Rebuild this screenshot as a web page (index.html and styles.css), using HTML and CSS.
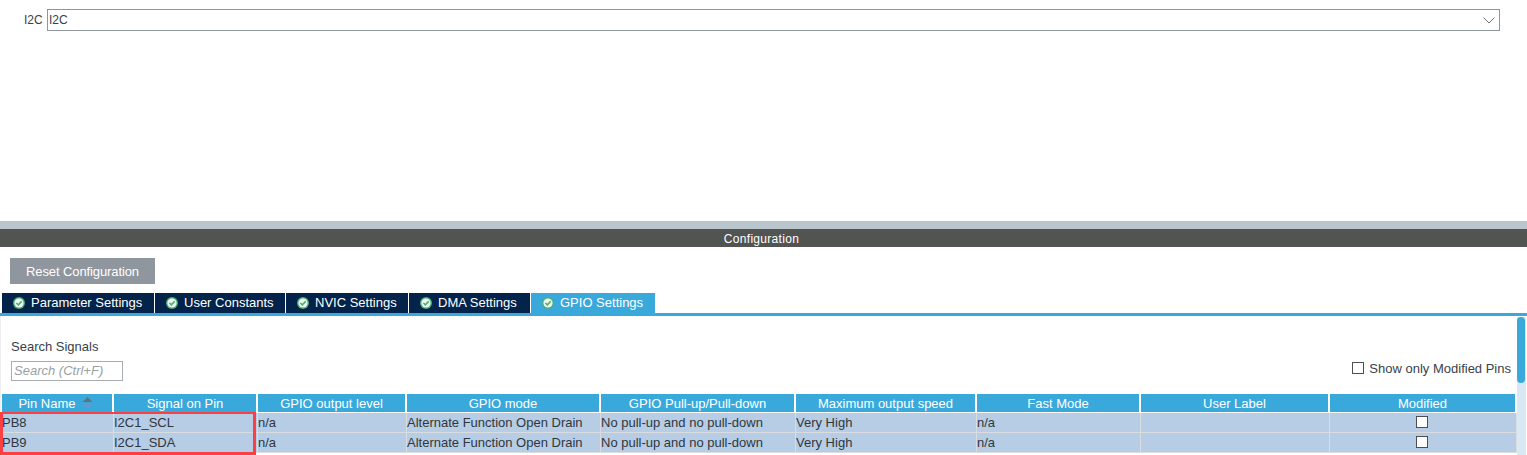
FILE: index.html
```html
<!DOCTYPE html>
<html lang="en">
<head>
<meta charset="utf-8">
<title>I2C GPIO Settings</title>
<link rel="stylesheet" href="styles.css">
</head>
<body>
<section class="mode">
  <label class="mode-label">I2C</label>
  <div class="select">
    <span>I2C</span>
    <svg class="chev" width="12" height="7" viewBox="0 0 12 7"><path d="M.5.5 6 6 11.5.5" fill="none" stroke="#6d7378" stroke-width="1"/></svg>
  </div>
</section>
<div class="splitter"></div>
<div class="config-title">Configuration</div>
<div class="toolbar"><button class="reset">Reset Configuration</button></div>
<nav class="tabs">
  <div class="tab t1"><svg class="ok" viewBox="0 0 12 12"><circle cx="6" cy="6" r="6" fill="#4caf73"/><circle cx="6" cy="6" r="4.6" fill="#eef6f0"/><path d="M3.4 6 5.3 7.9 8.7 4.4" fill="none" stroke="#4caf73" stroke-width="1.6"/></svg>Parameter Settings</div>
  <div class="tab t2"><svg class="ok" viewBox="0 0 12 12"><circle cx="6" cy="6" r="6" fill="#4caf73"/><circle cx="6" cy="6" r="4.6" fill="#eef6f0"/><path d="M3.4 6 5.3 7.9 8.7 4.4" fill="none" stroke="#4caf73" stroke-width="1.6"/></svg>User Constants</div>
  <div class="tab t3"><svg class="ok" viewBox="0 0 12 12"><circle cx="6" cy="6" r="6" fill="#4caf73"/><circle cx="6" cy="6" r="4.6" fill="#eef6f0"/><path d="M3.4 6 5.3 7.9 8.7 4.4" fill="none" stroke="#4caf73" stroke-width="1.6"/></svg>NVIC Settings</div>
  <div class="tab t4"><svg class="ok" viewBox="0 0 12 12"><circle cx="6" cy="6" r="6" fill="#4caf73"/><circle cx="6" cy="6" r="4.6" fill="#eef6f0"/><path d="M3.4 6 5.3 7.9 8.7 4.4" fill="none" stroke="#4caf73" stroke-width="1.6"/></svg>DMA Settings</div>
  <div class="tab t5 active"><svg class="ok" viewBox="0 0 12 12"><circle cx="6" cy="6" r="6" fill="#4caf73"/><circle cx="6" cy="6" r="4.6" fill="#eef6f0"/><path d="M3.4 6 5.3 7.9 8.7 4.4" fill="none" stroke="#4caf73" stroke-width="1.6"/></svg>GPIO Settings</div>
</nav>
<section class="panel">
  <div class="content">
    <div class="search-row">
      <div class="search">
        <div class="search-label">Search Signals</div>
        <div class="search-input">Search (Ctrl+F)</div>
      </div>
      <label class="only-mod"><span class="box"></span>Show only Modified Pins</label>
    </div>
    <div class="grid head">
      <div class="sorted">Pin Name<svg class="sort" width="11" height="12" viewBox="0 0 11 12"><path d="M5.5 0 10.5 5H.5Z" fill="#5c7387"/><path d="M5.5 12 10.5 7H.5Z" fill="#5d9ccb"/></svg></div>
      <div>Signal on Pin</div><div>GPIO output level</div><div>GPIO mode</div><div>GPIO Pull-up/Pull-down</div><div>Maximum output speed</div><div>Fast Mode</div><div>User Label</div><div>Modified</div>
    </div>
    <div class="grid row">
      <div>PB8</div><div>I2C1_SCL</div><div>n/a</div><div>Alternate Function Open Drain</div><div>No pull-up and no pull-down</div><div>Very High</div><div>n/a</div><div></div><div class="center"><span class="box"></span></div>
    </div>
    <div class="grid row">
      <div>PB9</div><div>I2C1_SDA</div><div>n/a</div><div>Alternate Function Open Drain</div><div>No pull-up and no pull-down</div><div>Very High</div><div>n/a</div><div></div><div class="center"><span class="box"></span></div>
    </div>
    <div class="highlight"></div>
  </div>
  <div class="scrollbar"><div class="thumb"></div></div>
</section>
</body>
</html>
```
FILE: styles.css
```css
* { box-sizing: border-box; }
html, body { margin: 0; height: 455px; overflow: hidden; background: #fff; }
body { font-family: "Liberation Sans", Arial, sans-serif; font-size: 13px; color: #39424a; }
.mode { height: 221px; padding: 9px 27px 0 24px; display: flex; align-items: flex-start; font-size: 12px; }
.mode-label { width: 23px; line-height: 22px; }
.select { flex: 1; height: 22px; border: 1px solid #8f969b; display: flex; align-items: center; justify-content: space-between; padding: 0 4px 0 1px; }
.splitter { height: 8px; background: #b9c5cc; }
.config-title { height: 18px; line-height: 20px; padding-right: 4px; background: #525452; color: #fff; text-align: center; font-size: 12px; letter-spacing: .3px; }
.toolbar { height: 46px; padding: 11px 0 0 10px; }
.reset { display: block; width: 145px; height: 26px; padding: 1px 0 0; border: 0; background: #8f969e; color: #fff; font: inherit; letter-spacing: -.1px; }
.tabs { height: 23px; border-bottom: 3px solid #39a9dc; padding-left: 2px; display: flex; gap: 1px; }
.tab { height: 20px; background: #03234b; color: #fff; line-height: 20px; padding-left: 11px; display: flex; align-items: center; white-space: nowrap; }
.tab.active { background: #39a9dc; }
.ok { width: 12px; height: 12px; margin-right: 6px; flex: none; }
.t1 { width: 152px; } .t2 { width: 130px; } .t3 { width: 122px; } .t4 { width: 121px; } .t5 { width: 124px; }
.panel { height: 139px; display: flex; padding-left: 1px; border-left: 1px solid #eee; }
.content { position: relative; width: 1515px; }
.search-row { height: 78px; display: flex; justify-content: space-between; padding: 24px 6px 0 9px; }
.search-label { line-height: 14px; margin-bottom: 7px; }
.search-input { width: 112px; height: 20px; border: 1px solid #a8adb1; color: #9a9fa3; font-style: italic; line-height: 18px; padding-left: 2px; }
.only-mod { display: flex; align-items: center; gap: 5px; height: 14px; margin-top: 21px; }
.box { display: block; width: 12px; height: 12px; border: 1px solid #4a4f54; background: #fff; }
.grid { display: grid; grid-template-columns: 112px 144px 149px 194px 195px 181px 164px 189px 187px; }
.head { height: 19px; }
.head > div { background: #39a9dc; background-clip: padding-box; border-right: 2px solid #fff; color: #fff; text-align: center; line-height: 19px; height: 18px; }
.head .sorted { display: flex; justify-content: center; align-items: center; gap: 6px; padding-right: 3px; }
.row { height: 20px; border-bottom: 1px solid #d9dde0; }
.row > div { background: #b7cde5; border-right: 1px solid #d9dde0; height: 19px; line-height: 20px; white-space: nowrap; color: #30373c; }
.row > .center { display: flex; align-items: flex-start; justify-content: center; padding: 3px 2px 0 0; }
.highlight { position: absolute; left: -2px; top: 96px; width: 256px; height: 43px; border: 3px solid #fb3f42; border-top-width: 2px; }
.scrollbar { width: 9px; margin-top: 1px; background: #d9e8f5; }
.thumb { width: 8px; height: 66px; background: #39a9dc; border-radius: 4px; }
```
